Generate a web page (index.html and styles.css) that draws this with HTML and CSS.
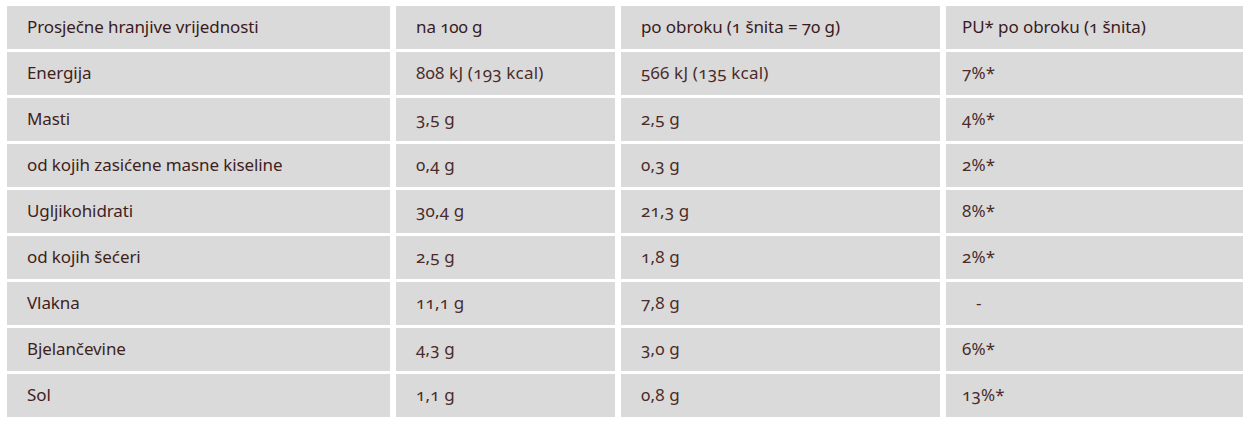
FILE: index.html
```html
<!DOCTYPE html>
<html lang="hr">
<head>
<meta charset="utf-8">
<title>Prosječne hranjive vrijednosti</title>
<link rel="stylesheet" href="styles.css">
</head>
<body>
<div class="nutri">
  <div class="cell head">Prosječne hranjive vrijednosti</div>
  <div class="cell head">na 100 g</div>
  <div class="cell head">po obroku (1 šnita = 70 g)</div>
  <div class="cell head last">PU* po obroku (1 šnita)</div>

  <div class="cell label">Energija</div>
  <div class="cell val">808 kJ (193 kcal)</div>
  <div class="cell val">566 kJ (135 kcal)</div>
  <div class="cell val last">7%*</div>

  <div class="cell label">Masti</div>
  <div class="cell val">3,5 g</div>
  <div class="cell val">2,5 g</div>
  <div class="cell val last">4%*</div>

  <div class="cell label">od kojih zasićene masne kiseline</div>
  <div class="cell val">0,4 g</div>
  <div class="cell val">0,3 g</div>
  <div class="cell val last">2%*</div>

  <div class="cell label">Ugljikohidrati</div>
  <div class="cell val">30,4 g</div>
  <div class="cell val">21,3 g</div>
  <div class="cell val last">8%*</div>

  <div class="cell label">od kojih šećeri</div>
  <div class="cell val">2,5 g</div>
  <div class="cell val">1,8 g</div>
  <div class="cell val last">2%*</div>

  <div class="cell label">Vlakna</div>
  <div class="cell val">11,1 g</div>
  <div class="cell val">7,8 g</div>
  <div class="cell val last dash">-</div>

  <div class="cell label">Bjelančevine</div>
  <div class="cell val">4,3 g</div>
  <div class="cell val">3,0 g</div>
  <div class="cell val last">6%*</div>

  <div class="cell label">Sol</div>
  <div class="cell val">1,1 g</div>
  <div class="cell val">0,8 g</div>
  <div class="cell val last">13%*</div>
</div>
</body>
</html>
```

FILE: styles.css
```css
html, body {
  margin: 0;
  padding: 0;
  background: #ffffff;
}

body {
  font-family: "Noto Sans", "DejaVu Sans", sans-serif;
  font-size: 17px;
  color: #3f1f20;
  font-variant-numeric: oldstyle-nums;
}

.nutri {
  display: grid;
  grid-template-columns: 383px 219px 319px 297px;
  grid-auto-rows: 43px;
  column-gap: 6px;
  row-gap: 3px;
  margin: 6px 8px 7px 7px;
}

.cell {
  background: #dadada;
  display: flex;
  align-items: center;
  padding: 0 0 2px 20px;
  white-space: nowrap;
  letter-spacing: -0.1px;
}

.cell.head {
  color: #3a1b1d;
}

.cell.last {
  padding-left: 16px;
}

.cell.val {
  color: #4a2c2a;
  letter-spacing: 0.2px;
}

.cell.dash {
  padding-left: 30px;
}
```
